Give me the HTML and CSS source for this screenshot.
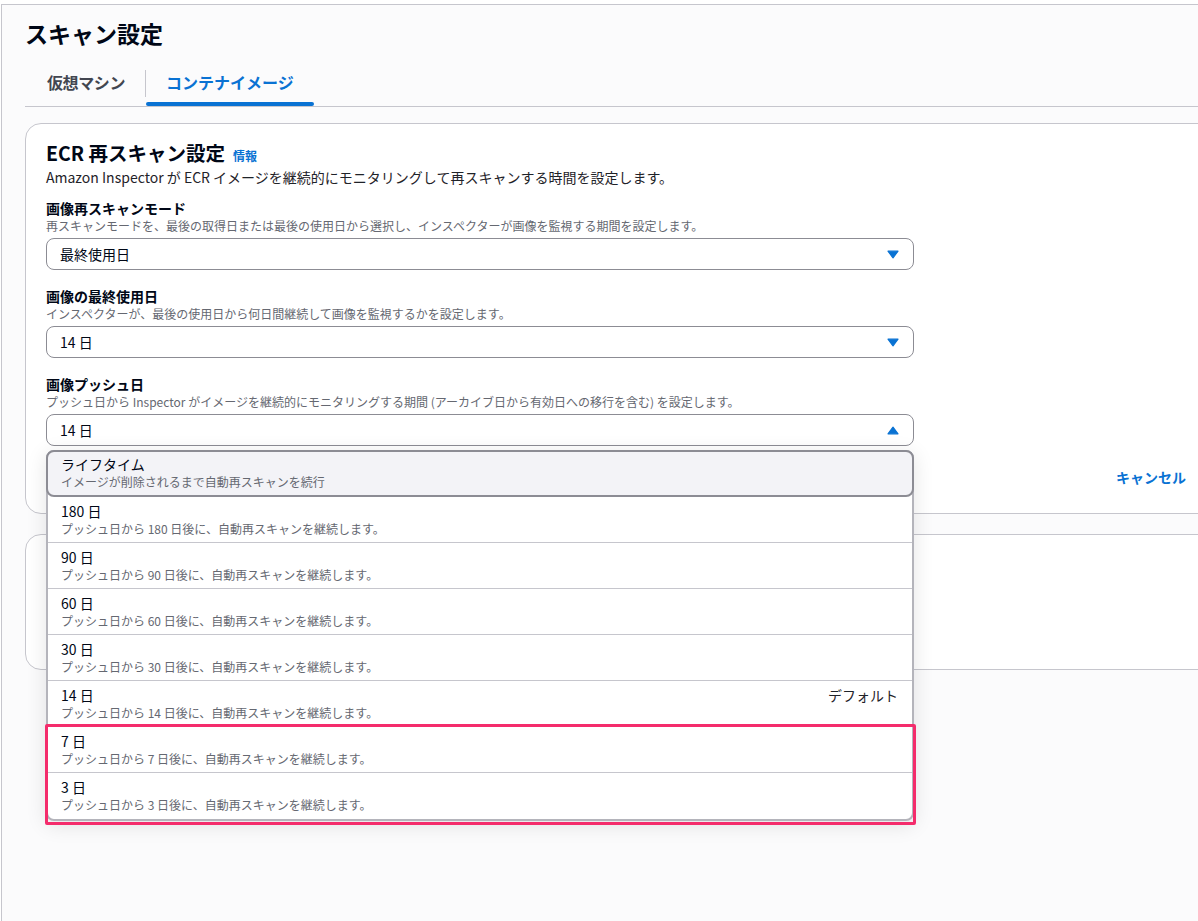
FILE: index.html
```html
<!DOCTYPE html>
<html lang="ja">
<head>
<meta charset="utf-8">
<title>スキャン設定</title>
<link rel="stylesheet" href="styles.css">
</head>
<body>
<div class="page">
  <h1 class="title">スキャン設定</h1>
  <div class="tabs">
    <div class="tab first-tab">仮想マシン</div>
    <span class="tab-sep"></span>
    <div class="tab active">コンテナイメージ</div>
  </div>

  <section class="card card-main">
    <header class="card-header">
      <h2 class="card-title">ECR 再スキャン設定<a class="info">情報</a></h2>
      <p class="card-desc">Amazon Inspector が ECR イメージを継続的にモニタリングして再スキャンする時間を設定します。</p>
    </header>

    <div class="fields">
      <div class="field">
        <div class="label">画像再スキャンモード</div>
        <div class="hint">再スキャンモードを、最後の取得日または最後の使用日から選択し、インスペクターが画像を監視する期間を設定します。</div>
        <div class="select">
          <span>最終使用日</span>
          <svg class="caret" width="12" height="9" viewBox="0 0 12 9"><path d="M1 1.2h10L6 7.8z" fill="#0972d3" stroke="#0972d3" stroke-width="1.2" stroke-linejoin="round"/></svg>
        </div>
      </div>

      <div class="field">
        <div class="label">画像の最終使用日</div>
        <div class="hint">インスペクターが、最後の使用日から何日間継続して画像を監視するかを設定します。</div>
        <div class="select">
          <span>14 日</span>
          <svg class="caret" width="12" height="9" viewBox="0 0 12 9"><path d="M1 1.2h10L6 7.8z" fill="#0972d3" stroke="#0972d3" stroke-width="1.2" stroke-linejoin="round"/></svg>
        </div>
      </div>

      <div class="field">
        <div class="label">画像プッシュ日</div>
        <div class="hint">プッシュ日から Inspector がイメージを継続的にモニタリングする期間 (アーカイブ日から有効日への移行を含む) を設定します。</div>
        <div class="select-wrap">
          <div class="select open">
            <span>14 日</span>
            <svg class="caret" width="12" height="9" viewBox="0 0 12 9"><path d="M1 7.8h10L6 1.2z" fill="#0972d3" stroke="#0972d3" stroke-width="1.2" stroke-linejoin="round"/></svg>
          </div>
          <ul class="dropdown">
            <li class="option highlighted">
              <div class="opt-title">ライフタイム</div>
              <div class="opt-desc">イメージが削除されるまで自動再スキャンを続行</div>
            </li>
            <li class="option first">
              <div class="opt-title">180 日</div>
              <div class="opt-desc">プッシュ日から 180 日後に、自動再スキャンを継続します。</div>
            </li>
            <li class="option">
              <div class="opt-title">90 日</div>
              <div class="opt-desc">プッシュ日から 90 日後に、自動再スキャンを継続します。</div>
            </li>
            <li class="option">
              <div class="opt-title">60 日</div>
              <div class="opt-desc">プッシュ日から 60 日後に、自動再スキャンを継続します。</div>
            </li>
            <li class="option">
              <div class="opt-title">30 日</div>
              <div class="opt-desc">プッシュ日から 30 日後に、自動再スキャンを継続します。</div>
            </li>
            <li class="option">
              <div class="opt-row"><span class="opt-title">14 日</span><span class="opt-tag">デフォルト</span></div>
              <div class="opt-desc">プッシュ日から 14 日後に、自動再スキャンを継続します。</div>
            </li>
            <li class="option">
              <div class="opt-title">7 日</div>
              <div class="opt-desc">プッシュ日から 7 日後に、自動再スキャンを継続します。</div>
            </li>
            <li class="option">
              <div class="opt-title">3 日</div>
              <div class="opt-desc">プッシュ日から 3 日後に、自動再スキャンを継続します。</div>
            </li>
            <li class="annotation" aria-hidden="true"></li>
          </ul>
        </div>
      </div>
    </div>

    <footer class="card-footer">
      <button class="btn-link">キャンセル</button>
    </footer>
  </section>

  <section class="card card-second"></section>
</div>
</body>
</html>
```

FILE: styles.css
```css
html, body {
  margin: 0;
  padding: 0;
  overflow: hidden;
  background: #ffffff;
}

body {
  font-family: "Noto Sans CJK JP", "Noto Sans", sans-serif;
  color: #000716;
  height: 921px;
}

.page {
  margin: 4px 0 0 1px;
  border-top: 1px solid #c6c6cd;
  border-left: 1px solid #c6c6cd;
  background: #fbfbfc;
  padding: 12px 24px 0 23px;
  width: 1202px;
  height: 916px;
}

.title {
  margin: 0;
  font-size: 23px;
  line-height: 32px;
  font-weight: 700;
  color: #000716;
}

/* Tabs */
.tabs {
  margin-top: 9px;
  display: flex;
  align-items: flex-start;
  padding-left: 1px;
  border-bottom: 1px solid #c6c6cd;
  height: 48px;
  margin-right: -200px;
}

.tab {
  position: relative;
  height: 48px;
  display: flex;
  align-items: center;
  padding: 0 20px;
  font-size: 16px;
  font-weight: 700;
  color: #424650;
  line-height: 20px;
}

.tab.first-tab {
  padding: 0 20px 0 21px;
  letter-spacing: -0.4px;
}

.tab.active {
  color: #0972d3;
}

.tab.active::after {
  content: "";
  position: absolute;
  left: 0;
  right: 0;
  bottom: 0;
  height: 4px;
  border-radius: 2px;
  background: #0972d3;
}

.tab-sep {
  width: 1px;
  height: 27px;
  margin-top: 12px;
  background: #c6c6cd;
}

/* Cards */
.card {
  background: #ffffff;
  border: 1px solid #c6c6cd;
  border-radius: 16px;
}

.card-main {
  margin-top: 16px;
  position: relative;
  z-index: 2;
}

.card-second {
  margin-top: 20px;
  height: 134px;
  position: relative;
  z-index: 1;
}

.card-header {
  padding: 15px 20px 0 20px;
}

.card-title {
  margin: 0;
  font-size: 19.5px;
  line-height: 28px;
  font-weight: 700;
  display: flex;
  align-items: baseline;
}

.info {
  margin-left: 8px;
  font-size: 12px;
  font-weight: 700;
  color: #0972d3;
  line-height: 16px;
}

.card-desc {
  margin: 0;
  font-size: 14px;
  line-height: 20px;
  color: #1f2329;
}

.fields {
  margin-top: 11px;
  padding: 0 20px;
  display: flex;
  flex-direction: column;
  gap: 16px;
}

.label {
  font-size: 14px;
  line-height: 20px;
  font-weight: 700;
}

.hint {
  font-size: 12px;
  line-height: 16px;
  color: #656871;
}

.select {
  margin-top: 4px;
  box-sizing: border-box;
  width: 868px;
  height: 32px;
  border: 1px solid #8c8c94;
  border-radius: 8px;
  background: #ffffff;
  display: flex;
  align-items: center;
  justify-content: space-between;
  padding: 0 14px 0 13px;
  font-size: 14px;
  line-height: 20px;
}

.caret {
  display: block;
}

.select-wrap {
  position: relative;
}

/* Dropdown */
.dropdown {
  position: absolute;
  top: calc(100% + 4px);
  left: 0;
  width: 868px;
  box-sizing: border-box;
  margin: 0;
  padding: 0 0 1px 0;
  list-style: none;
  background: #ffffff;
  border: 2px solid #b4b4bb;
  border-radius: 8px;
  box-shadow: 0 4px 20px 1px rgba(0, 7, 22, 0.10);
  z-index: 10;
}

.option {
  padding: 5px 14px 5px 13px;
  border-top: 1px solid #c6c6cd;
}

.option.first {
  border-top: none;
}

.option.highlighted {
  margin: -2px -2px 0 -2px;
  border: 2px solid #8c8c94;
  border-radius: 8px;
  background: #f3f3f7;
  padding: 3px 14px 5px 13px;
}

.opt-title {
  font-size: 14px;
  line-height: 19px;
  color: #000716;
}

.opt-row {
  display: flex;
  justify-content: space-between;
  align-items: center;
}

.opt-tag {
  font-size: 14px;
  line-height: 19px;
  color: #1f2329;
}

.opt-desc {
  font-size: 12px;
  line-height: 16px;
  color: #656871;
}

.annotation {
  position: absolute;
  top: 272px;
  left: -3px;
  width: 871px;
  height: 101px;
  box-sizing: border-box;
  border: 3px solid #f42c6c;
  border-radius: 2px;
  pointer-events: none;
}

/* Footer */
.card-footer {
  margin-top: 15px;
  padding: 0 20px 20px 20px;
  display: flex;
  justify-content: flex-end;
}

.btn-link {
  height: 32px;
  padding: 0 20px;
  font-family: inherit;
  font-size: 14px;
  font-weight: 700;
  line-height: 20px;
  border-radius: 20px;
  border: none;
  background: transparent;
  color: #0972d3;
  cursor: pointer;
}
```
